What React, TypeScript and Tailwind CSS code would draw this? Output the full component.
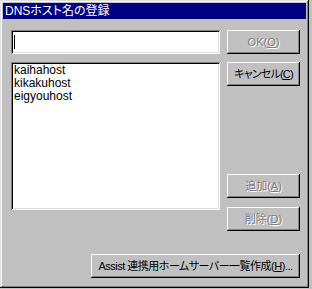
import React from "react"

const face =
  "font-['Liberation_Sans','Noto_Sans_CJK_JP',sans-serif] [font-feature-settings:'palt']"

// win95 style raised button
const Btn = ({
  children,
  disabled,
  className = "",
}: {
  children: React.ReactNode
  disabled?: boolean
  className?: string
}) => {
  return (
    <button
      type="button"
      className={
        "h-[24px] flex items-center justify-center whitespace-nowrap bg-[#c0c0c0] text-[11px] leading-none shadow-[inset_-1px_-1px_0_#000,inset_1px_1px_0_#fff,inset_-2px_-2px_0_#808080] " +
        (disabled
          ? "text-[#808080] [text-shadow:1px_1px_0_#fff] "
          : "text-black ") +
        className
      }
    >
      {children}
    </button>
  )
}

const sunken =
  "bg-white shadow-[inset_1px_1px_0_#808080,inset_-1px_-1px_0_#fff,inset_2px_2px_0_#000,inset_-2px_-2px_0_#dfdfdf]"

const hosts = ["kaihahost", "kikakuhost", "eigyouhost"]

const App = () => {
  return (
    <div className={"w-[312px] h-[289px] bg-[#c0c0c0] " + face}>
      {/* window frame */}
      <div className="w-[309px] h-[288px] flex flex-col p-[3px] bg-[#c0c0c0] shadow-[inset_-1px_-1px_0_#000,inset_1px_1px_0_#dfdfdf,inset_-2px_-2px_0_#808080,inset_2px_2px_0_#fff]">
        {/* title bar */}
        <div className="h-[16px] flex items-center px-[2px] bg-[#000080] text-white text-[12px]">
          DNSホスト名の登録
        </div>

        <div className="pl-[8px] pt-[11px]">
          <div className="flex items-start gap-[7px]">
            {/* left column */}
            <div className="w-[209px] flex flex-col">
              <div className={"h-[24px] flex items-center pl-[3px] " + sunken}>
                <span className="w-px h-[14px] bg-black" />
              </div>
              <div
                className={
                  "mt-[8px] h-[148px] pt-[2px] pl-[3px] text-[12px] leading-[13px] text-black " +
                  sunken
                }
              >
                {hosts.map((h) => (
                  <div key={h}>{h}</div>
                ))}
              </div>
            </div>

            {/* buttons */}
            <div className="w-[73px] flex flex-col">
              <Btn disabled>
                OK(<span className="underline">O</span>)
              </Btn>
              <Btn className="mt-[8px] tracking-[-0.8px]">
                キャンセル(<span className="underline">C</span>)
              </Btn>
              <Btn disabled className="mt-[88px]">
                追加(<span className="underline">A</span>)
              </Btn>
              <Btn disabled className="mt-[9px]">
                削除(<span className="underline">D</span>)
              </Btn>
            </div>
          </div>

          <Btn className="w-[209px] ml-[80px] mt-[23px] tracking-[-0.5px]">
            Assist 連携用ホームサーバー一覧作成(<span className="underline">H</span>)...
          </Btn>
        </div>
      </div>
    </div>
  )
}

export default App
